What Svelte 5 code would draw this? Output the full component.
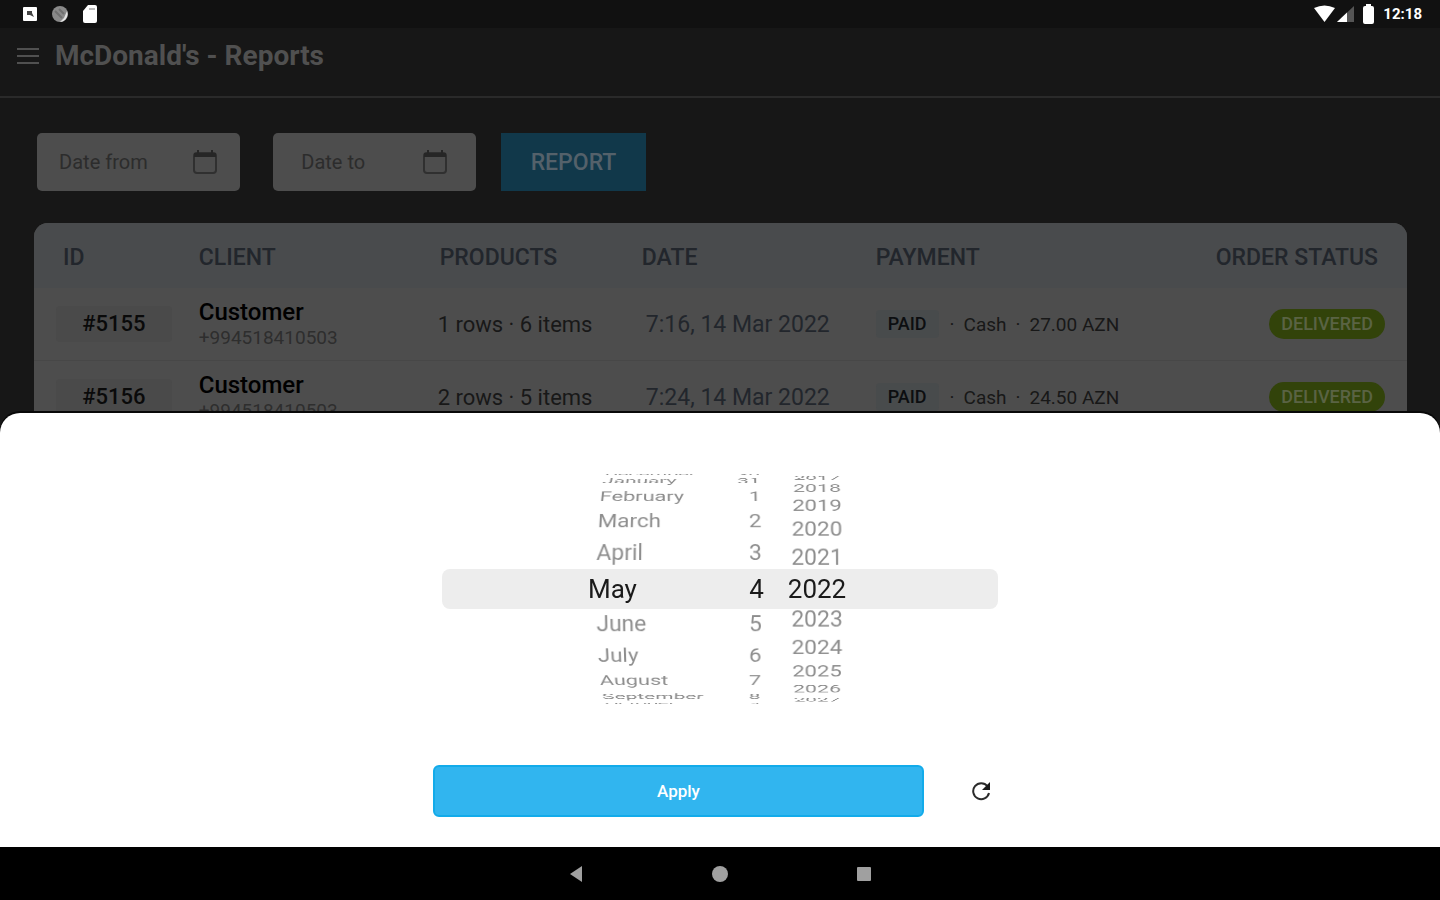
<script>
  const months = ["January", "February", "March", "April", "May", "June", "July", "August", "September", "October", "November", "December"];

  let orders = [
    { id: "#5155", client: "Customer", phone: "+994518410503", rows: 1, items: 6, date: "7:16, 14 Mar 2022", total: "27.00 AZN" },
    { id: "#5156", client: "Customer", phone: "+994518410503", rows: 2, items: 5, date: "7:24, 14 Mar 2022", total: "24.50 AZN" },
  ];

  let month = $state(4);
  let day = $state(4);
  let year = $state(2022);

  const steps = [-5, -4, -3, -2, -1, 0, 1, 2, 3, 4, 5];

  let wheels = $derived([
    {
      name: "month",
      angle: 15.4,
      label: (k) => months[(month + k + 12) % 12],
      pick: (k) => (month = (month + k + 12) % 12),
    },
    {
      name: "day",
      angle: 15.4,
      label: (k) => ((day + k - 1 + 31) % 31) + 1,
      pick: (k) => (day = ((day + k - 1 + 31) % 31) + 1),
    },
    {
      name: "year",
      angle: 13.3,
      label: (k) => year + k,
      pick: (k) => (year = year + k),
    },
  ]);

  function reset() {
    month = 4;
    day = 4;
    year = 2022;
  }
</script>

{#snippet calendar()}
  <svg class="calendar" viewBox="0 0 26 26" fill="none" aria-hidden="true">
    <rect x="2" y="4" width="22" height="20" rx="3" stroke="#303030" stroke-width="2" />
    <path d="M2 4h22v4H2z" fill="#262626" />
    <path d="M6 1v3M20 1v3" stroke="#262626" stroke-width="2" />
  </svg>
{/snippet}

<div class="screen">
  <div class="status-bar">
    <div class="status-left">
      <svg width="16" height="18" viewBox="0 0 16 18">
        <rect x="1" y="2" width="14" height="14" rx="1" fill="#fff" />
        <path d="M5 6h5v2l2 4-4-2H5z" fill="#444" />
      </svg>
      <svg width="18" height="18" viewBox="0 0 18 18">
        <circle cx="9" cy="9" r="8" fill="#8a8a8a" />
        <path d="M16 6a8 8 0 0 1-7 11l4-4z" fill="#e4e4e4" />
        <path d="M4 6l7 7M8 4l5 5" stroke="#707070" stroke-width="2" />
      </svg>
      <svg width="16" height="18" viewBox="0 0 16 18">
        <path d="M6 0h7a2 2 0 0 1 2 2v14a2 2 0 0 1-2 2H3a2 2 0 0 1-2-2V6z" fill="#fff" />
        <path d="M7 4h6" stroke="#bbb" stroke-width="2" />
      </svg>
    </div>
    <div class="status-right">
      <svg width="21" height="18" viewBox="0 0 21 18">
        <path d="M0 3Q10.500 -2 21 3L10.500 17z" fill="#fff" />
      </svg>
      <svg width="17" height="18" viewBox="0 0 17 18">
        <path d="M17 1v16H0z" fill="#555" />
        <path d="M10 7.500V17H0z" fill="#fff" />
      </svg>
      <svg class="battery" width="11" height="20" viewBox="0 0 11 20">
        <path d="M3 0h5v2h1a2 2 0 0 1 2 2v14a2 2 0 0 1-2 2H2a2 2 0 0 1-2-2V4a2 2 0 0 1 2-2h1z" fill="#fff" />
      </svg>
      <span class="clock">12:18</span>
    </div>
  </div>

  <header class="app-bar">
    <button class="menu" aria-label="Menu">
      <svg width="24" height="18" viewBox="0 0 24 18">
        <path d="M1 2h22M1 9h22M1 16h22" stroke="#505050" stroke-width="2" />
      </svg>
    </button>
    <h1>McDonald's - Reports</h1>
  </header>

  <main class="content">
    <div class="filters">
      <label class="field">
        <input type="text" placeholder="Date from" aria-label="Date from" />
        {@render calendar()}
      </label>
      <label class="field">
        <input type="text" placeholder="Date to" aria-label="Date to" />
        {@render calendar()}
      </label>
      <button class="report">REPORT</button>
    </div>

    <table class="orders">
      <thead>
        <tr>
          <th class="col-id">ID</th>
          <th class="col-client">CLIENT</th>
          <th class="col-products">PRODUCTS</th>
          <th class="col-date">DATE</th>
          <th class="col-payment">PAYMENT</th>
          <th class="col-status">ORDER STATUS</th>
        </tr>
      </thead>
      <tbody>
        {#each orders as order}
          <tr>
            <td class="col-id"><span class="chip">{order.id}</span></td>
            <td class="col-client">
              <div class="client">{order.client}</div>
              <div class="phone">{order.phone}</div>
            </td>
            <td class="col-products">{order.rows} rows · {order.items} items</td>
            <td class="col-date">{order.date}</td>
            <td class="col-payment">
              <div class="payment">
                <span class="paid">PAID</span>
                <span>·</span>
                <span>Cash</span>
                <span>·</span>
                <span>{order.total}</span>
              </div>
            </td>
            <td class="col-status"><span class="delivered">DELIVERED</span></td>
          </tr>
        {/each}
      </tbody>
    </table>

    <section class="sheet">
      <div class="picker">
        {#each wheels as wheel}
          <div class="wheel {wheel.name}" role="group" aria-label={wheel.name}>
            {#each steps as k}
              <button
                class="item"
                class:picked={k === 0}
                style="--turn: {-k * wheel.angle}deg"
                onclick={() => wheel.pick(k)}>{wheel.label(k)}</button>
            {/each}
          </div>
        {/each}
      </div>
      <div class="actions">
        <button class="apply">Apply</button>
        <button class="refresh" aria-label="Reset date" onclick={reset}>
          <svg width="20" height="20" viewBox="0 0 20 20" fill="none">
            <path d="M16.500 5.200A8 8 0 1 0 18 12" stroke="#2b2b2b" stroke-width="2" />
            <path d="M19 1v8h-8z" fill="#1a1a1a" />
          </svg>
        </button>
      </div>
    </section>
  </main>

  <nav class="nav-bar">
    <button aria-label="Back">
      <svg width="16" height="16" viewBox="0 0 16 16"><path d="M14 0v16L2 8z" fill="#a0a0a0" /></svg>
    </button>
    <button aria-label="Home">
      <svg width="16" height="16" viewBox="0 0 16 16"><circle cx="8" cy="8" r="8" fill="#a0a0a0" /></svg>
    </button>
    <button aria-label="Recents">
      <svg width="16" height="16" viewBox="0 0 16 16"><rect x="1" y="1" width="14" height="14" rx="1" fill="#a0a0a0" /></svg>
    </button>
  </nav>
</div>

<style>
  :global(body) {
    background: #171717;
    font-family: Roboto, "Liberation Sans", sans-serif;
  }

  button {
    font-family: inherit;
    border: none;
    padding: 0;
    background: none;
    cursor: pointer;
  }

  svg {
    display: block;
  }

  .screen {
    display: flex;
    flex-direction: column;
    height: 100vh;
    overflow: hidden;
  }

  .status-bar {
    display: flex;
    justify-content: space-between;
    align-items: center;
    height: 28px;
    padding: 0 18px 0 22px;
    background: #111;
    flex: none;
  }

  .status-left {
    display: flex;
    gap: 13px;
  }

  .status-right {
    display: flex;
    align-items: center;
    gap: 2px;
  }

  .battery {
    margin: 0 7px;
  }

  .clock {
    color: #fff;
    font-size: 15px;
    font-weight: 700;
  }

  .app-bar {
    display: flex;
    align-items: center;
    gap: 15px;
    height: 55px;
    padding: 0 16px 13px;
    border-bottom: 2px solid #2a2a2a;
    flex: none;
  }

  h1 {
    margin: 0;
    color: #505050;
    font-size: 28px;
    line-height: 32px;
    font-weight: 700;
  }

  .content {
    position: relative;
    flex: 1;
    overflow: hidden;
    padding: 35px 33px 0 34px;
  }

  .filters {
    display: flex;
    padding-left: 3px;
    margin-bottom: 32px;
  }

  .field {
    display: flex;
    justify-content: space-around;
    align-items: center;
    width: 203px;
    height: 58px;
    margin-right: 33px;
    border-radius: 5px;
    background: #4d4d4d;
  }

  .field + .report {
    margin-left: -8px;
  }

  .field input {
    field-sizing: content;
    border: none;
    outline: none;
    padding: 0;
    background: none;
    color: #222;
    font-family: inherit;
    font-size: 20px;
  }

  .field input::placeholder {
    color: #2c2c2c;
    opacity: 1;
  }

  .calendar {
    width: 26px;
    height: 26px;
  }

  .report {
    width: 145px;
    height: 58px;
    background: #11384a;
    color: #54616a;
    font-size: 23px;
    font-weight: 500;
  }

  .orders {
    width: 100%;
    table-layout: fixed;
    border-collapse: separate;
    border-spacing: 0;
    border-radius: 14px;
    overflow: hidden;
    background: #4d4d4d;
  }

  th, td {
    box-sizing: border-box;
    padding: 0;
    text-align: left;
    white-space: nowrap;
  }

  th {
    height: 65px;
    padding-top: 3px;
    background: #494b4d;
    color: #22262c;
    font-size: 23px;
    font-weight: 500;
  }

  td {
    height: 73px;
    border-bottom: 1px solid #474747;
    color: #181818;
    font-size: 22px;
  }

  .col-id { width: 12%; }
  .col-client { width: 17.4%; }
  .col-products { width: 14.8%; }
  .col-date { width: 17.1%; }
  .col-payment { width: 20%; }
  .col-status { text-align: right; }

  th.col-id { padding-left: 29px; }
  td.col-id { padding-left: 22px; }
  th.col-products { padding-left: 2px; }
  th.col-date { padding-left: 1px; }
  td.col-date {
    padding-left: 5px;
    color: #22262c;
    font-size: 23px;
  }
  th.col-status { padding-right: 29px; }
  td.col-status { padding-right: 22px; }

  .chip {
    display: block;
    width: 116px;
    border-radius: 4px;
    background: #4a4a4a;
    color: #0a0a0a;
    font-weight: 500;
    line-height: 36px;
    text-align: center;
  }

  .client {
    color: #000;
    font-size: 24px;
    font-weight: 500;
    line-height: 28px;
  }

  .phone {
    color: #2e2e2e;
    font-size: 19px;
    line-height: 24px;
  }

  .payment {
    display: flex;
    align-items: center;
    gap: 9px;
    font-size: 19px;
  }

  .paid {
    padding: 0 12px;
    margin-right: 2px;
    border-radius: 4px;
    background: #484b4c;
    color: #0c0e10;
    font-size: 18px;
    font-weight: 500;
    line-height: 28px;
  }

  .delivered {
    display: inline-block;
    padding: 0 12px;
    border-radius: 15px;
    background: #32430a;
    color: #5a6344;
    font-size: 18px;
    font-weight: 500;
    line-height: 30px;
  }

  .sheet {
    position: absolute;
    left: 0;
    right: 0;
    bottom: 0;
    display: flex;
    flex-direction: column;
    align-items: center;
    gap: 59px;
    padding: 59px 24px 30px;
    border-radius: 20px 20px 0 0;
    background: #fff;
    box-shadow: 0 -2px 0 #080808;
  }

  .picker {
    position: relative;
    display: flex;
    justify-content: center;
    box-sizing: border-box;
    width: 100%;
    max-width: 556px;
    height: 234px;
    padding-left: 6px;
  }

  /* band behind the chosen row */
  .picker::before {
    content: "";
    position: absolute;
    inset: calc(50% - 20px) 0;
    border-radius: 8px;
    background: #ededed;
  }

  .wheel {
    position: relative;
    display: grid;
    align-items: center;
    perspective: 700px;
  }

  .month { width: 134px; }
  .day { width: 32px; margin-right: 22px; }
  .year { width: 66px; }

  /* rows sit on a drum of 135px radius */
  .item {
    grid-area: 1 / 1;
    color: #000;
    font-size: 23px;
    line-height: 30px;
    text-align: left;
    opacity: 0.45;
    transform: translateZ(-135px) rotateX(var(--turn)) translateZ(135px);
  }

  .day .item { text-align: right; }
  .year .item { text-align: center; }

  .item.picked {
    margin: 0 -6%;
    color: #1a1a1a;
    font-size: 26px;
    opacity: 1;
  }

  .actions {
    display: flex;
    gap: 31px;
    width: 100%;
    max-width: 574px;
  }

  .apply {
    flex: 1;
    height: 52px;
    border: 2px solid #12abea;
    border-radius: 6px;
    background: #31b5ef;
    color: #fff;
    font-size: 17px;
    font-weight: 500;
  }

  .refresh {
    display: grid;
    place-items: center;
    width: 52px;
    height: 52px;
  }

  .nav-bar {
    display: flex;
    justify-content: center;
    align-items: center;
    gap: 96px;
    height: 53px;
    background: #000;
    flex: none;
  }

  .nav-bar button {
    display: grid;
    place-items: center;
    width: 48px;
    height: 48px;
  }
</style>
